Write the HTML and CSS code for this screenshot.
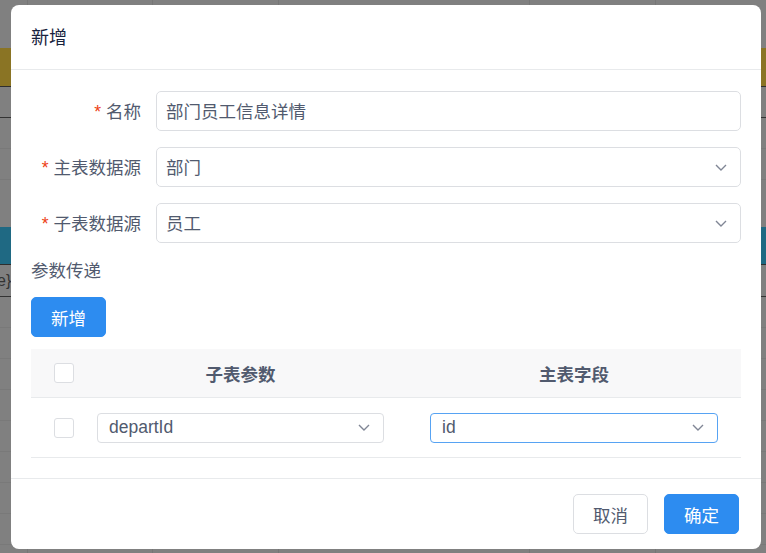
FILE: index.html
```html
<!DOCTYPE html>
<html lang="zh-CN">
<head>
  <meta charset="UTF-8" />
  <meta name="viewport" content="width=device-width, initial-scale=1.0"/>
  <title>新增</title>
  <link rel="stylesheet" href="styles.css">
</head>
<body>
  <!-- Dimmed page behind the modal -->
  <div class="backdrop">
    <div class="bg-row bg-top"></div>
    <div class="bg-row bg-gold"></div>
    <div class="bg-row bg-dark"></div>
    <div class="bg-row bg-plain"></div>
    <div class="bg-row bg-plain"></div>
    <div class="bg-row bg-blank"></div>
    <div class="bg-row bg-blue"></div>
    <div class="bg-row bg-text">e}</div>
    <div class="bg-row bg-plain"></div>
    <div class="bg-row bg-plain"></div>
    <div class="bg-row bg-plain"></div>
    <div class="bg-row bg-plain"></div>
    <div class="bg-row bg-plain"></div>
    <div class="bg-row bg-plain"></div>
    <div class="bg-row bg-plain"></div>
    <div class="bg-row bg-plain"></div>
  </div>

  <!-- Modal -->
  <div class="modal">
    <div class="modal-header">新增</div>

    <div class="modal-body">
      <div class="form-item">
        <label class="form-label"><span class="req">*</span>名称</label>
        <div class="input">部门员工信息详情</div>
      </div>

      <div class="form-item">
        <label class="form-label"><span class="req">*</span>主表数据源</label>
        <div class="input select">
          <span>部门</span>
          <svg class="arrow" width="12" height="7" viewBox="0 0 12 7"><path d="M1 1l5 5 5-5" fill="none" stroke="#808695" stroke-width="1.4"/></svg>
        </div>
      </div>

      <div class="form-item form-item-last">
        <label class="form-label"><span class="req">*</span>子表数据源</label>
        <div class="input select">
          <span>员工</span>
          <svg class="arrow" width="12" height="7" viewBox="0 0 12 7"><path d="M1 1l5 5 5-5" fill="none" stroke="#808695" stroke-width="1.4"/></svg>
        </div>
      </div>

      <div class="section-title">参数传递</div>
      <button class="btn btn-primary">新增</button>

      <div class="table">
        <div class="table-row table-head">
          <div class="cell cell-check"><span class="checkbox"></span></div>
          <div class="cell cell-sub">子表参数</div>
          <div class="cell cell-main">主表字段</div>
        </div>
        <div class="table-row">
          <div class="cell cell-check"><span class="checkbox"></span></div>
          <div class="cell cell-sub">
            <div class="select-sm">
              <span>departId</span>
              <svg class="arrow" width="12" height="7" viewBox="0 0 12 7"><path d="M1 1l5 5 5-5" fill="none" stroke="#808695" stroke-width="1.4"/></svg>
            </div>
          </div>
          <div class="cell cell-main">
            <div class="select-sm focused">
              <span>id</span>
              <svg class="arrow" width="12" height="7" viewBox="0 0 12 7"><path d="M1 1l5 5 5-5" fill="none" stroke="#808695" stroke-width="1.4"/></svg>
            </div>
          </div>
        </div>
      </div>
    </div>

    <div class="modal-footer">
      <button class="btn btn-default">取消</button>
      <button class="btn btn-primary">确定</button>
    </div>
  </div>
</body>
</html>
```

FILE: styles.css
```css
:root {
  --primary: #2d8cf0;
  --border: #dcdee2;
  --line: #e8eaec;
  --text: #515a6e;
  --title: #17233d;
}

body {
  margin: 0;
  width: 766px;
  height: 553px;
  overflow: hidden;
  font-family: "Liberation Sans", "Noto Sans CJK SC", sans-serif;
  font-size: 17.5px;
  color: var(--text);
  background: #808080;
  position: relative;
}

/* Page behind the mask */
.backdrop {
  height: 553px;
  background-image: repeating-linear-gradient(90deg, transparent 0, transparent 27px, #767676 27px, #767676 28px, transparent 28px, transparent 125.5px);
}

.bg-row {
  height: 30px;
  border-bottom: 1px solid #797979;
}

.bg-top {
  height: 48px;
  border-bottom: none;
}

.bg-gold {
  height: 38px;
  background: #8a7424;
  border-bottom: 1px solid #2e2e2e;
}

.bg-dark {
  border-bottom-color: #333;
}

.bg-blank {
  height: 47px;
  border-bottom: none;
}

.bg-blue {
  height: 37px;
  background: #1f6983;
  border-bottom: 1px solid #2e2e2e;
}

.bg-text {
  height: 31px;
  line-height: 31px;
  color: #333;
  text-indent: -3px;
  font-size: 16px;
  border-bottom-color: #333;
}

/* Modal */
.modal {
  position: absolute;
  top: 5px;
  left: 11px;
  width: 750px;
  height: 544px;
  background: #fff;
  border-radius: 8px;
  overflow: hidden;
}

.modal-header {
  height: 65px;
  box-sizing: border-box;
  line-height: 62px;
  padding: 0 20px 2px;
  border-bottom: 1px solid var(--line);
  color: var(--title);
  font-size: 18px;
  font-family: "Noto Sans CJK SC", sans-serif;
}

.modal-body {
  padding: 21px 20px 20px;
}

.form-item {
  display: flex;
  height: 40px;
  margin-bottom: 16px;
}

.form-item-last {
  margin-bottom: 13px;
}

.form-label {
  width: 125px;
  box-sizing: border-box;
  padding-right: 15px;
  text-align: right;
  line-height: 40px;
  font-family: "Noto Sans CJK SC", sans-serif;
}

.req {
  color: #ed4014;
  margin-right: 5px;
  font-family: "Liberation Sans", sans-serif;
}

.input {
  flex: 1;
  height: 40px;
  box-sizing: border-box;
  border: 1px solid var(--border);
  border-radius: 5px;
  padding: 0 9px;
  line-height: 38px;
  font-family: "Noto Sans CJK SC", sans-serif;
}

.select {
  display: flex;
  justify-content: space-between;
  align-items: center;
  padding-right: 13px;
}

.section-title {
  height: 27px;
  line-height: 27px;
  margin-bottom: 14px;
  font-family: "Noto Sans CJK SC", sans-serif;
}

.btn {
  height: 40px;
  padding: 0 19px;
  border-radius: 5px;
  font-size: 17.5px;
  font-family: "Noto Sans CJK SC", sans-serif;
  cursor: pointer;
}

.btn-primary {
  background: var(--primary);
  border: 1px solid var(--primary);
  color: #fff;
}

.btn-default {
  background: #fff;
  border: 1px solid var(--border);
  color: var(--text);
}

/* Parameter table */
.table {
  margin-top: 12px;
}

.table-row {
  display: grid;
  grid-template-columns: 66px 333px 311px;
  border-bottom: 1px solid var(--line);
  align-items: center;
}

.table-head {
  height: 48px;
  background: #f8f8f9;
  font-weight: bold;
  font-family: "Noto Sans CJK SC", sans-serif;
}

.table-row:not(.table-head) {
  height: 59px;
}

.cell-check {
  padding-left: 23px;
  display: flex;
}

.checkbox {
  width: 20px;
  height: 20px;
  box-sizing: border-box;
  border: 1px solid var(--border);
  border-radius: 3px;
  background: #fff;
}

.cell-sub {
  padding-right: 46px;
  text-align: center;
}

.cell-main {
  padding-right: 23px;
  text-align: center;
}

.select-sm {
  height: 30px;
  box-sizing: border-box;
  border: 1px solid var(--border);
  border-radius: 4px;
  padding: 0 13px 0 11px;
  display: flex;
  justify-content: space-between;
  align-items: center;
  text-align: left;
  font-weight: normal;
}

.select-sm.focused {
  border-color: #57a3f3;
}

.modal-footer {
  border-top: 1px solid var(--line);
  padding: 15px 22px 15px;
  display: flex;
  justify-content: flex-end;
  gap: 16px;
}
```
